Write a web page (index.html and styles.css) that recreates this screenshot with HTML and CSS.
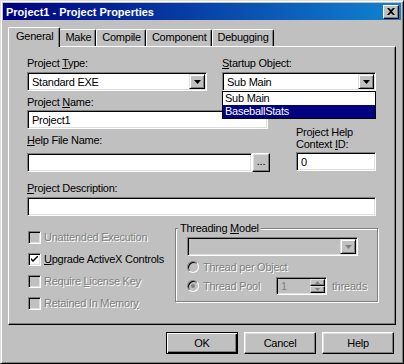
FILE: index.html
```html
<!DOCTYPE html>
<html lang="en">
<head>
    <meta charset="UTF-8">
    <title>Project1 - Project Properties</title>
    <link rel="stylesheet" href="styles.css">
</head>
<body>
    <div class="window">
        <div class="titlebar">
            <span class="title">Project1 - Project Properties</span>
            <span class="close-btn">
                <svg width="8" height="7" viewBox="0 0 8 7"><path d="M0 0h2l2 2 2-2h2L5 3.5 8 7H6L4 5 2 7H0l3-3.5z" fill="#000"/></svg>
            </span>
        </div>

        <div class="tabs">
            <div class="tab active">General</div>
            <div class="tab">Make</div>
            <div class="tab">Compile</div>
            <div class="tab">Component</div>
            <div class="tab">Debugging</div>
        </div>

        <div class="panel">
            <div class="top-row">
                <div class="type-col">
                    <label>Project <u>T</u>ype:</label>
                    <div class="field combo">
                        <span class="value">Standard EXE</span>
                        <span class="combo-btn"><svg width="7" height="4" viewBox="0 0 7 4"><path d="M0 0h7L3.5 4z" fill="#000"/></svg></span>
                    </div>
                </div>
                <div class="startup-col">
                    <label><u>S</u>tartup Object:</label>
                    <div class="field combo">
                        <span class="value">Sub Main</span>
                        <span class="combo-btn"><svg width="7" height="4" viewBox="0 0 7 4"><path d="M0 0h7L3.5 4z" fill="#000"/></svg></span>
                    </div>
                    <ul class="dropdown">
                        <li>Sub Main</li>
                        <li class="selected">BaseballStats</li>
                    </ul>
                </div>
            </div>

            <div class="mid-row">
                <div class="name-col">
                    <label>Project <u>N</u>ame:</label>
                    <div class="field name-input"><span class="value">Project1</span></div>
                    <label class="help-label"><u>H</u>elp File Name:</label>
                    <div class="help-row">
                        <div class="field help-input"></div>
                        <span class="btn browse-btn">...</span>
                    </div>
                </div>
                <div class="context-col">
                    <label class="two-lines">Project Help<br>Context <u>I</u>D:</label>
                    <div class="field context-input"><span class="value">0</span></div>
                </div>
            </div>

            <label class="desc-label"><u>P</u>roject Description:</label>
            <div class="field desc-input"></div>

            <div class="bottom-row">
                <div class="checks">
                    <div class="check disabled"><span class="box"></span><span>Unattended Execution</span></div>
                    <div class="check"><span class="box on"><svg width="7" height="7" viewBox="0 0 7 7"><path d="M0 2l2 2 5-5v2L2 6 0 4z" fill="#000"/></svg></span><span><u>U</u>pgrade ActiveX Controls</span></div>
                    <div class="check disabled"><span class="box"></span><span>Require <u>L</u>icense Key</span></div>
                    <div class="check disabled"><span class="box"></span><span>Retained In Memor<u>y</u></span></div>
                </div>

                <fieldset class="threading">
                    <legend>Threading <u>M</u>odel</legend>
                    <div class="field combo thread-combo disabled-field">
                        <span class="value"></span>
                        <span class="combo-btn"><svg width="7" height="4" viewBox="0 0 7 4"><path d="M0 0h7L3.5 4z" fill="#808080"/></svg></span>
                    </div>
                    <div class="radio-row disabled">
                        <span class="radio"></span><span>Thread per Object</span>
                    </div>
                    <div class="radio-row disabled">
                        <span class="radio on"></span><span class="pool-label">Thread Pool</span>
                        <div class="field spin disabled-field">
                            <span class="value">1</span>
                            <span class="spin-btns">
                                <span class="spin-btn"><svg width="5" height="3" viewBox="0 0 5 3"><path d="M2.5 0L5 3H0z" fill="#808080"/></svg></span>
                                <span class="spin-btn"><svg width="5" height="3" viewBox="0 0 5 3"><path d="M0 0h5L2.5 3z" fill="#808080"/></svg></span>
                            </span>
                        </div>
                        <span class="threads">threads</span>
                    </div>
                </fieldset>
            </div>
        </div>

        <div class="buttons">
            <span class="btn default">OK</span>
            <span class="btn">Cancel</span>
            <span class="btn">Help</span>
        </div>
    </div>
</body>
</html>
```

FILE: styles.css
```css
* {
    box-sizing: border-box;
}
body {
    margin: 0;
    font-family: "Liberation Sans", Arial, sans-serif;
    font-size: 11px;
    letter-spacing: -0.25px;
    color: #000;
    background: #c0c0c0;
}
.window {
    width: 404px;
    height: 364px;
    background: #c0c0c0;
    border: 1px solid;
    border-color: #dfdfdf #000 #000 #dfdfdf;
    box-shadow: inset 1px 1px #fff, inset -1px -1px #808080;
    padding: 2px;
}
.titlebar {
    height: 17px;
    display: flex;
    align-items: center;
    justify-content: space-between;
    padding: 0 2px 0 3px;
    background: linear-gradient(to right, #000080, #1084d0);
    color: #fff;
    font-weight: bold;
    letter-spacing: 0;
}
.close-btn {
    width: 16px;
    height: 14px;
    display: flex;
    align-items: center;
    justify-content: center;
    background: #c0c0c0;
    border: 1px solid;
    border-color: #fff #000 #000 #fff;
    box-shadow: inset -1px -1px #808080;
}

/* tabs */
.tabs {
    display: flex;
    align-items: flex-end;
    height: 19px;
    margin: 7px 0 0 5px;
    position: relative;
    z-index: 1;
}
.tab {
    height: 17px;
    line-height: 15px;
    padding: 0 4px 0 5px;
    background: #c0c0c0;
    border: 1px solid;
    border-bottom: none;
    border-color: #fff #000 #000 #fff;
    border-radius: 2px 2px 0 0;
    box-shadow: inset -1px 0 #808080;
}
.tab.active {
    height: 20px;
    line-height: 17px;
    padding: 0 6px 0 7px;
    margin-bottom: -1px;
}
.tab.active + .tab {
    border-left: none;
}

/* main panel */
.panel {
    margin-left: 5px;
    width: 388px;
    height: 279px;
    border: 1px solid;
    border-color: #fff #000 #000 #fff;
    box-shadow: inset -1px -1px #808080;
    padding: 10px 0 0 18px;
}
label {
    display: block;
    line-height: 13px;
}
.field {
    height: 19px;
    background: #fff;
    border: 1px solid;
    border-color: #808080 #fff #fff #808080;
    box-shadow: inset 1px 1px #000, inset -1px -1px #dfdfdf;
    padding: 1px 1px 1px 4px;
    display: flex;
    align-items: center;
}
.combo {
    align-items: stretch;
    margin-top: 2px;
}
.combo .value {
    flex: 1;
    align-self: center;
}
.combo-btn {
    width: 16px;
    display: flex;
    align-items: center;
    justify-content: center;
    background: #c0c0c0;
    border: 1px solid;
    border-color: #dfdfdf #000 #000 #dfdfdf;
    box-shadow: inset 1px 1px #fff, inset -1px -1px #808080;
}
.disabled-field {
    background: #c0c0c0;
    color: #808080;
}

.top-row {
    display: flex;
}
.type-col {
    width: 180px;
}
.startup-col {
    width: 154px;
    margin-left: 15px;
    position: relative;
    z-index: 2;
}
.dropdown {
    position: absolute;
    top: 34px;
    left: 0;
    width: 154px;
    margin: 0;
    padding: 0;
    list-style: none;
    background: #fff;
    border: 1px solid #000;
}
.dropdown li {
    line-height: 13px;
    padding-left: 2px;
}
.dropdown li.selected {
    background: #000080;
    color: #fff;
}

.mid-row {
    display: flex;
    margin-top: 5px;
}
.name-col {
    width: 243px;
}
.name-input {
    width: 241px;
    margin-top: 1px;
}
.help-label {
    margin-top: 5px;
}
.help-row {
    display: flex;
    margin-top: 6px;
}
.help-input {
    width: 225px;
}
.btn {
    display: flex;
    align-items: center;
    justify-content: center;
    background: #c0c0c0;
    border: 1px solid;
    border-color: #fff #000 #000 #fff;
    box-shadow: inset -1px -1px #808080, inset 1px 1px #dfdfdf;
}
.browse-btn {
    width: 18px;
    height: 19px;
    padding-bottom: 3px;
}
.context-col {
    width: 80px;
    margin-left: 26px;
    padding-top: 30px;
}
.two-lines {
    line-height: 12px;
}
.context-input {
    margin-top: 2px;
}

.desc-label {
    margin-top: 10px;
}
.desc-input {
    width: 349px;
    margin-top: 2px;
}

/* checkboxes and threading group */
.bottom-row {
    display: flex;
    margin-top: 6px;
}
.checks {
    width: 148px;
    padding: 4px 0 0 1px;
}
.check {
    height: 22px;
    display: flex;
    align-items: center;
    gap: 3px;
}
.check .box {
    width: 13px;
    height: 13px;
    background: #c0c0c0;
    border: 1px solid;
    border-color: #808080 #fff #fff #808080;
    box-shadow: inset 1px 1px #000, inset -1px -1px #dfdfdf;
    display: flex;
    align-items: center;
    justify-content: center;
}
.check .box.on {
    background: #fff;
}
.disabled {
    color: #808080;
    text-shadow: 1px 1px #fff;
}
.threading {
    width: 200px;
    height: 80px;
    margin: 0;
    padding: 0 10px 0 11px;
    border: 1px solid #808080;
    box-shadow: 1px 1px #fff, inset 1px 1px #fff;
}
.threading legend {
    margin-left: -9px;
    padding: 0 2px;
    line-height: 13px;
    background: #c0c0c0;
}
.thread-combo {
    width: 171px;
}
.radio-row {
    display: flex;
    align-items: center;
    gap: 4px;
    height: 16px;
    margin-top: 3px;
}
.radio-row + .radio-row {
    height: 18px;
    margin-top: 2px;
}
.radio {
    width: 12px;
    height: 12px;
    border-radius: 50%;
    background: #c0c0c0;
    border: 1px solid;
    border-color: #808080 #fff #fff #808080;
    box-shadow: inset 1px 1px #000;
    display: flex;
    align-items: center;
    justify-content: center;
    text-shadow: none;
}
.radio.on::after {
    content: "";
    width: 4px;
    height: 4px;
    border-radius: 50%;
    background: #808080;
}
.pool-label {
    width: 69px;
}
.spin {
    width: 51px;
    height: 18px;
    align-items: stretch;
    text-shadow: none;
}
.spin .value {
    flex: 1;
    align-self: center;
}
.spin-btns {
    width: 15px;
    display: flex;
    flex-direction: column;
}
.spin-btn {
    flex: 1;
    display: flex;
    align-items: center;
    justify-content: center;
    background: #c0c0c0;
    border: 1px solid;
    border-color: #dfdfdf #000 #000 #dfdfdf;
    box-shadow: inset -1px -1px #808080;
}
.threads {
    margin-left: 1px;
}

/* dialog buttons */
.buttons {
    display: flex;
    justify-content: flex-end;
    gap: 6px;
    margin-top: 7px;
    padding-right: 7px;
}
.buttons .btn {
    width: 72px;
    height: 22px;
}
.buttons .btn.default {
    border-color: #000;
    box-shadow: inset 1px 1px #fff, inset -1px -1px #000, inset -2px -2px #808080;
}
```
